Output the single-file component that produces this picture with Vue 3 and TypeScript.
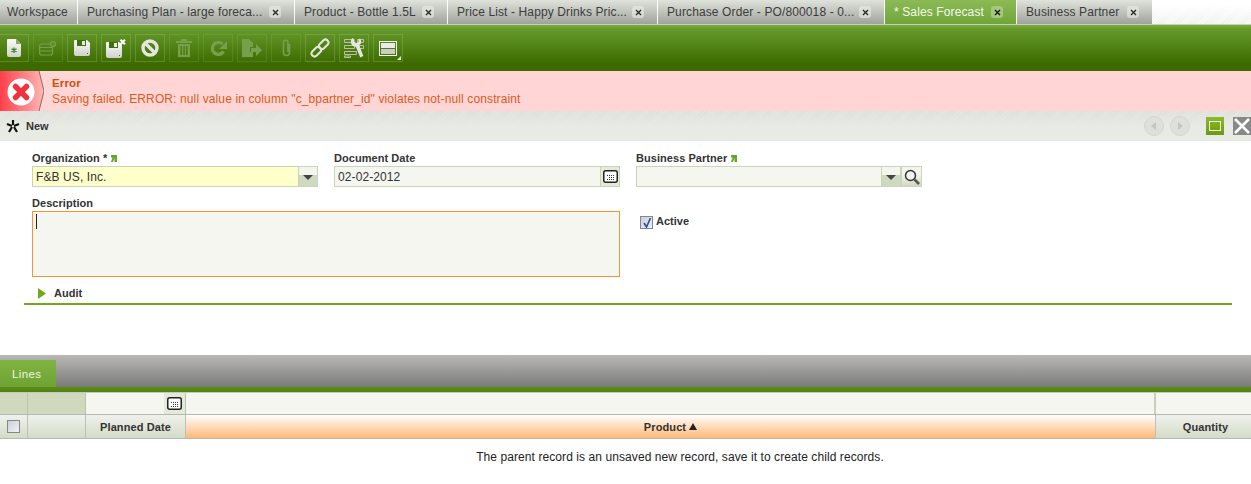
<script setup lang="ts">
const tabs = [
  { label: 'Workspace', w: 77, close: false, active: false },
  { label: 'Purchasing Plan - large foreca...', w: 216, close: true, active: false },
  { label: 'Product - Bottle 1.5L', w: 152, close: true, active: false },
  { label: 'Price List - Happy Drinks Pric...', w: 209, close: true, active: false },
  { label: 'Purchase Order - PO/800018 - 0...', w: 226, close: true, active: false },
  { label: '* Sales Forecast', w: 131, close: true, active: true },
  { label: 'Business Partner', w: 135, close: true, active: false },
]
</script>

<template>
  <div class="page">
    <div class="tabs">
      <div v-for="t in tabs" :key="t.label" class="tab" :class="{ active: t.active }" :style="{ width: t.w + 'px' }">
        <span class="tab-label">{{ t.label }}</span>
        <span v-if="t.close" class="tab-x">
          <svg width="7" height="7" viewBox="0 0 7 7"><path d="M1 1l5 5M6 1L1 6" stroke="currentColor" stroke-width="1.200" /></svg>
        </span>
      </div>
    </div>

    <div class="toolbar">
      <div class="tb first">
        <svg width="14" height="18" viewBox="0 0 14 18"><defs><linearGradient id="ig" x1="0" x2="0" y1="0" y2="1"><stop offset="0" stop-color="#fbfbf9"/><stop offset="1" stop-color="#cfd2cb"/></linearGradient></defs><path d="M1 0h8l5 5v11a2 2 0 0 1-2 2H2a2 2 0 0 1-2-2V1a1 1 0 0 1 1-1z" fill="url(#ig)"/><path d="M9 0l5 5H9z" fill="#8ea372"/><path d="M7 8.500v5.500M4.500 9.800l5 3M9.500 9.800l-5 3" stroke="#3f7a10" stroke-width="1.200"/></svg>
      </div>
      <div class="tb off">
        <svg width="18" height="15" viewBox="0 0 18 15" fill="none" stroke="#76a04c" stroke-width="1.100"><rect x=".6" y="3" width="13" height="11" rx="2"/><path d="M.6 6.500h13M.6 10h13"/><circle cx="14" cy="3" r="2.600" fill="#5f8f2a"/></svg>
      </div>
      <div class="tb">
        <svg width="16" height="16" viewBox="0 0 16 16"><path d="M1 0h12l3 3v11a2 2 0 0 1-2 2H2a2 2 0 0 1-2-2V1a1 1 0 0 1 1-1z" fill="url(#ig)"/><path d="M3 0h9v6H3z" fill="#3f6f10"/><path d="M8 1h3v4H8z" fill="#e9ebe6"/><path d="M13 13h1v1h-1z" fill="#555"/></svg>
      </div>
      <div class="tb">
        <svg width="20" height="19" viewBox="0 0 20 19"><path d="M1 3h12l3 3v11a2 2 0 0 1-2 2H2a2 2 0 0 1-2-2V4a1 1 0 0 1 1-1z" fill="url(#ig)"/><path d="M3 3h9v6H3z" fill="#3f6f10"/><path d="M8 4h3v4H8z" fill="#e9ebe6"/><path d="M13 16h1v1h-1z" fill="#555"/><path d="M14.500.8l4.500 4.500M19 .8l-4.500 4.500" stroke="#fff" stroke-width="2"/></svg>
      </div>
      <div class="tb">
        <svg width="18" height="18" viewBox="0 0 18 18" fill="none" stroke="#e4e6e0" stroke-width="3.400"><circle cx="9" cy="9" r="7"/><path d="M4 4l10 10"/></svg>
      </div>
      <div class="tb off">
        <svg width="16" height="18" viewBox="0 0 16 18" fill="#76a04c"><path d="M0 2h16v2H0zM5 0h6v2H5z"/><path d="M2 5h12v13H2zM4.500 7v9H6V7zM7.300 7v9h1.500V7zM10 7v9h1.500V7z" fill-rule="evenodd"/></svg>
      </div>
      <div class="tb off">
        <svg width="17" height="17" viewBox="0 0 17 17" fill="none"><path d="M13.500 11.500a6 6 0 1 1-1-7.500" stroke="#76a04c" stroke-width="3.400"/><path d="M17 1v8H9z" fill="#76a04c"/></svg>
      </div>
      <div class="tb off">
        <svg width="20" height="18" viewBox="0 0 20 18" fill="#76a04c"><path d="M0 0h7l4 4v4H8v5h3v5H0z"/><path d="M9 9h5V5l6 6-6 6v-4H9z"/></svg>
      </div>
      <div class="tb off">
        <svg width="11" height="18" viewBox="0 0 11 18" fill="none" stroke="#76a04c" stroke-width="1.600"><path d="M8.500 5v8.500a3 3 0 0 1-6 0V3.500a2.200 2.200 0 0 1 4.400 0V13"/></svg>
      </div>
      <div class="tb">
        <svg width="20" height="20" viewBox="0 0 20 20" fill="none" stroke="#e4e6e0" stroke-width="2"><rect x="-5" y="-3" width="11" height="6" rx="3" transform="translate(6 14) rotate(-45)"/><rect x="-6" y="-3" width="11" height="6" rx="3" transform="translate(14 6) rotate(-45)"/></svg>
      </div>
      <div class="tb">
        <svg width="20" height="20" viewBox="0 0 20 20"><path d="M.5 1.500h8v3h-8zM.5 7.500h10v3h-10zM.5 13.500h12v3h-12zM.5 18h6v1.500h-6zM13.500 1.500h6v3h-6zM15.500 7.500h4v3h-4z" fill="none" stroke="#b4c4a4"/><path d="M8.500 0l2 1.500v2.500l2 1 2-1V1.500l1.500-1a5 5 0 0 1-.7 6.800l4 10.700-3 1.500-4.500-10.800A5 5 0 0 1 8.500 0z" fill="#e4e6e0"/></svg>
      </div>
      <div class="tb corner">
        <svg width="18" height="15" viewBox="0 0 18 15"><rect x=".5" y=".5" width="17" height="14" fill="none" stroke="#f4f5f0"/><rect x="2" y="2" width="14" height="5" fill="#e9ebe6"/><rect x="2" y="8" width="14" height="5" fill="#c9cdc4"/></svg>
        <span class="corner-mark"></span>
      </div>
    </div>

    <div class="error">
      <div class="err-icon">
        <svg width="44" height="40" viewBox="0 0 44 40">
          <defs><linearGradient id="eg" x1="0" x2="1"><stop offset="0" stop-color="#ff3f4a"/><stop offset="1" stop-color="#ffb8b8"/></linearGradient></defs>
          <path d="M0 0h39l5 20-5 20H0z" fill="url(#eg)"/>
          <path d="M39 0l5 20-5 20" fill="none" stroke="#8f6a58" stroke-width="1"/>
          <circle cx="21" cy="21" r="13.500" fill="#fff"/>
          <path d="M15.500 15.500l11 11M26.500 15.500l-11 11" stroke="#ee3340" stroke-width="5.500" stroke-linecap="round"/>
        </svg>
      </div>
      <div class="err-text">
        <div class="err-title">Error</div>
        <div class="err-msg">Saving failed. ERROR: null value in column "c_bpartner_id" violates not-null constraint</div>
      </div>
    </div>

    <div class="titlebar">
      <svg class="new-ic" width="14" height="14" viewBox="0 0 14 14" stroke="#111" stroke-width="2.200"><path d="M7 1v5M1 5l5 2M13 5L8 7M3 13l3-5M11 13L8 8"/></svg>
      <span class="new-label">New</span>
      <span class="spacer"></span>
      <span class="round"><svg width="8" height="8" viewBox="0 0 8 8"><path d="M6 0v8L1 4z" fill="#c4c6c1"/></svg></span>
      <span class="round r2"><svg width="8" height="8" viewBox="0 0 8 8"><path d="M2 0v8l5-4z" fill="#c4c6c1"/></svg></span>
      <span class="maxi"><span></span></span>
      <span class="closer"><svg width="18" height="18" viewBox="0 0 18 18"><path d="M2 2l14 14M16 2L2 16" stroke="#fff" stroke-width="2.600"/></svg></span>
    </div>

    <div class="form">
      <div class="row">
        <div class="field">
          <div class="lbl">Organization *<svg class="ln" width="6" height="7" viewBox="0 0 6 7"><path d="M0 0h6v7H3.500V3L2 7H0l1.500-4.500H0z" fill="#6aa32d"/></svg></div>
          <div class="inputs">
            <div class="inp req">F&amp;B US, Inc.</div>
            <div class="dd"><svg width="10" height="5" viewBox="0 0 10 5"><path d="M0 0h10L5 5z" fill="#444"/></svg></div>
          </div>
        </div>
        <div class="field">
          <div class="lbl">Document Date</div>
          <div class="inputs">
            <div class="inp">02-02-2012</div>
            <div class="dd cal">
              <svg width="15" height="13" viewBox="0 0 15 13"><rect x=".75" y=".75" width="13.500" height="11.500" rx="2" fill="#fff" stroke="#222" stroke-width="1.500"/><path d="M4 5.500h8M6 7.500h6M4 9.500h8" stroke="#333" stroke-dasharray="1 1"/></svg>
            </div>
          </div>
        </div>
        <div class="field">
          <div class="lbl">Business Partner<svg class="ln" width="6" height="7" viewBox="0 0 6 7"><path d="M0 0h6v7H3.500V3L2 7H0l1.500-4.500H0z" fill="#6aa32d"/></svg></div>
          <div class="inputs">
            <div class="inp"></div>
            <div class="dd"><svg width="10" height="5" viewBox="0 0 10 5"><path d="M0 0h10L5 5z" fill="#444"/></svg></div>
            <div class="dd search">
              <svg width="16" height="16" viewBox="0 0 16 16"><circle cx="6.500" cy="6.500" r="5" fill="#f2f3ee" stroke="#333" stroke-width="1.500"/><path d="M10.500 10.500l4.500 4.500" stroke="#555" stroke-width="2.600"/></svg>
            </div>
          </div>
        </div>
      </div>
      <div class="row r-desc">
        <div class="desc-wrap">
          <div class="lbl">Description</div>
          <div class="textarea"><span class="caret"></span></div>
        </div>
        <div class="active-wrap">
          <span class="check"><svg width="10" height="10" viewBox="0 0 10 10"><path d="M2 5l2.500 4L8.500 0" fill="none" stroke="#2b4f9e" stroke-width="1.600"/></svg></span>
          <span class="lbl-inline">Active</span>
        </div>
      </div>
      <div class="audit">
        <svg width="8" height="11" viewBox="0 0 8 11"><path d="M0 0l8 5.500L0 11z" fill="#73a81c"/></svg>
        <span>Audit</span>
      </div>
    </div>

    <div class="lines-bar">
      <div class="lines-tab">Lines</div>
    </div>
    <div class="gridhead">
      <div class="g filter">
        <div class="c c0 shade"></div>
        <div class="c c1 shade"></div>
        <div class="c c2 f2">
          <span class="f-in"></span>
          <span class="f-cal"><svg width="15" height="13" viewBox="0 0 15 13"><rect x=".75" y=".75" width="13.500" height="11.500" rx="2" fill="#fff" stroke="#222" stroke-width="1.500"/><path d="M4 5.500h8M6 7.500h6M4 9.500h8" stroke="#333" stroke-dasharray="1 1"/></svg></span>
        </div>
        <div class="c c3 f3"></div>
        <div class="c c4 f3 last"></div>
      </div>
      <div class="g header">
        <div class="c c0 hc"><span class="cb"></span></div>
        <div class="c c1 hc"></div>
        <div class="c c2 hc">Planned Date</div>
        <div class="c c3 hc sorted">Product <svg width="8" height="7" viewBox="0 0 8 7"><path d="M0 7h8L4 0z" fill="#222"/></svg></div>
        <div class="c c4 hc last qty">Quantity</div>
      </div>
    </div>
    <div class="msg">The parent record is an unsaved new record, save it to create child records.</div>
  </div>
</template>

<style>
html, body { margin: 0; background: #fff; overflow: hidden; }
</style>

<style scoped>
.page { width: 1251px; height: 484px; overflow: hidden; font-family: "Liberation Sans", Arial, sans-serif; color: #333; background: #fff; }

.tabs { display: flex; height: 24px; border-bottom: 1px solid #c9cbc6; background: linear-gradient(#fff 20%, rgba(255, 255, 255, .35)), repeating-linear-gradient(135deg, #f4f4f2 0 1px, #e6e7e4 1px 2px); }
.tab { box-sizing: border-box; height: 24px; margin-right: 1px; padding-left: 7px; display: flex; align-items: center; justify-content: space-between; padding-right: 13px; background: linear-gradient(#e0e2dc, #a0a29c); font-size: 12px; letter-spacing: .12px; color: #3c3c3c; flex: none; white-space: nowrap; }
.tab:first-child { padding-right: 0; }
.tab:not(:first-child) { padding-left: 9px; }
.tab.active { background: linear-gradient(#8cba55, #70a53a); color: #f4f8ec; }
.tab-label { display: block; }
.tab-x { width: 12px; height: 12px; border-radius: 3px; background: rgba(235, 237, 230, .6); color: #222; display: flex; align-items: center; justify-content: center; }
.tab.active .tab-x { background: #a4c77c; color: #111; }

.toolbar { box-sizing: border-box; height: 46px; padding: 9px 0 0 0; display: flex; gap: 4px; background: linear-gradient(#7ab036 0, #669a2c 8%, #4d7d10 55%, #3c6a00 85%, #3c6a00 100%); }
.tb { box-sizing: border-box; width: 30px; height: 28px; border: 1px solid rgba(170, 205, 130, .28); display: flex; align-items: center; justify-content: center; flex: none; position: relative; }
.tb.first { margin-left: -1px; border-left: 0; }
.tb.off { border-color: rgba(170, 205, 130, .16); }
.corner-mark { position: absolute; right: 1px; bottom: 1px; width: 0; height: 0; border-left: 4px solid transparent; border-bottom: 4px solid #e9ebe6; }

.error { height: 40px; display: flex; background: #ffd5d5; }
.err-icon { width: 44px; height: 40px; flex: none; }
.err-icon svg { display: block; }
.err-text { padding: 4px 0 0 8px; font-size: 12px; letter-spacing: .12px; color: #dc5c1c; line-height: 16px; }
.err-title { font-size: 11.500px; font-weight: bold; color: #c9500f; }

.titlebar { box-sizing: border-box; height: 30px; display: flex; align-items: center; padding: 0 0 0 6px; background: linear-gradient(rgba(232, 234, 228, .2), #e8eae4 16px), repeating-linear-gradient(135deg, #e4e5e1 0 1px, #dadbd7 1px 2px); }
.new-ic { flex: none; }
.new-label { margin-left: 6px; font-size: 11px; font-weight: bold; color: #333; }
.spacer { flex: 1; }
.round { width: 20px; height: 20px; border-radius: 50%; background: #dfe0dc; border: 1px solid #d5d6d2; box-sizing: border-box; display: flex; align-items: center; justify-content: center; }
.r2 { margin-left: 6px; }
.maxi { margin-left: 16px; width: 18px; height: 18px; background: linear-gradient(#8cba2c, #6a9a10); display: flex; align-items: center; justify-content: center; }
.maxi span { display: block; width: 10px; height: 8px; border: 1px solid #eef3dc; }
.closer { margin-left: 9px; width: 18px; height: 18px; background: #888; display: flex; }

.form { height: 214px; box-sizing: border-box; padding: 10px 0 0 32px; background: #fff; }
.row { display: flex; gap: 16px; }
.field { width: 286px; }
.lbl { box-sizing: border-box; padding-top: 1px; font-size: 11px; letter-spacing: .05px; font-weight: bold; color: #333; line-height: 13px; height: 15px; display: flex; align-items: flex-start; gap: 4px; white-space: pre; }
.ln { flex: none; margin-top: 3px; }
.inputs { display: flex; height: 21px; }
.inp { flex: 1; box-sizing: border-box; height: 21px; border: 1px solid #c8d5b9; background: #f4f6ef; font-size: 12px; line-height: 19px; padding: 1px 0 0 3px; color: #333; letter-spacing: .1px; }
.inp.req { background: #ffffcb; }
.dd { box-sizing: border-box; flex: none; width: 20px; height: 21px; margin-left: -1px; border: 1px solid #c8d5b9; background: linear-gradient(#f3f5ee 40%, #cfd8c0 40%); display: flex; align-items: center; justify-content: center; }
.dd svg { margin-top: 2px; }
.cal { background: #e4eada; }
.cal svg { margin-top: 0; }
.search { margin-left: 0; width: 21px; background: linear-gradient(#f3f5ee 40%, #cfd8c0 100%); }
.search svg { margin-top: 0; }
.r-desc { margin-top: 9px; gap: 20px; }
.desc-wrap { width: 588px; }
.textarea { box-sizing: border-box; height: 66px; border: 1px solid #f69532; background: #f4f6ef; padding: 2px; }
.caret { display: block; width: 1px; height: 15px; background: #222; margin-left: 1px; }
.active-wrap { display: flex; align-items: flex-start; gap: 3px; padding-top: 20px; font-size: 11px; font-weight: bold; color: #333; }
.check { box-sizing: border-box; width: 13px; height: 13px; border: 1px solid #808a8e; background: linear-gradient(135deg, #c9cfdb, #eef0f4); display: flex; align-items: center; justify-content: center; }
.lbl-inline { line-height: 12px; margin-top: -1px; }
.audit { box-sizing: border-box; margin: 8px 0 0 -8px; width: 1208px; height: 20px; border-bottom: 2px solid #73a81c; display: flex; align-items: center; gap: 8px; padding: 0 0 2px 14px; font-size: 11px; font-weight: bold; color: #333; }

.lines-bar { height: 37px; box-sizing: border-box; padding-top: 5px; background: linear-gradient(#b9b8b5, #7b7b7b 86%, #5a8f14 86%, #4f8210 100%); }
.lines-tab { box-sizing: border-box; width: 56px; height: 27px; padding-left: 12px; background: linear-gradient(#80b341, #6ea334); color: #eef5e2; font-size: 11.500px; line-height: 28px; letter-spacing: .35px; }

.g { display: grid; grid-template-columns: 28px 58px 100px 970px 95px; box-sizing: border-box; }
.filter { height: 23px; border-top: 1px solid #c4c8c0; border-bottom: 1px solid #b5b9b4; }
.header { height: 24px; border-bottom: 1px solid #b5b9b4; }
.c { box-sizing: border-box; border-right: 1px solid #bcc2b2; min-width: 0; }
.filter .c3 { border-right: 2px solid #c8d0bc; }
.c.last { border-right: 0; }
.shade { background: #d0d9be; }
.f2 { display: flex; background: #f4f6ef; }
.f-in { flex: 1; }
.f-cal { width: 21px; background: #e4eada; display: flex; align-items: center; justify-content: center; }
.f3 { background: #f4f6ef; }
.hc { background: linear-gradient(#f0f1ed, #d3dcc7); font-size: 11px; font-weight: bold; color: #333; display: flex; align-items: center; justify-content: center; gap: 3px; letter-spacing: .1px; }
.qty { padding-left: 4px; }
.sorted { background: linear-gradient(#fff, #ffb877); }
.cb { box-sizing: border-box; width: 13px; height: 13px; border: 1px solid #888; background: linear-gradient(135deg, #c9cfdb, #f2f3f6); }

.msg { margin: 11px 0 0 109px; width: 1142px; text-align: center; font-size: 12px; letter-spacing: .08px; line-height: 14px; color: #222; }
</style>
